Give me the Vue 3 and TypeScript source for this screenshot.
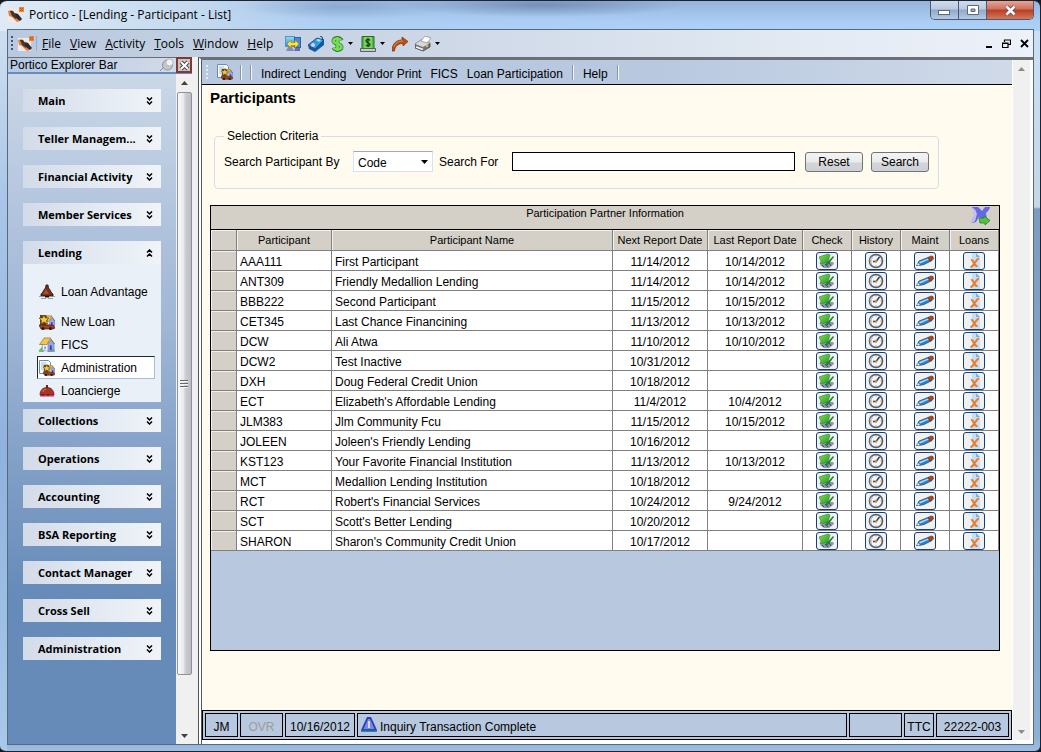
<script setup lang="ts">
import { ref } from 'vue'

interface Participant {
  code: string
  name: string
  next: string
  last: string
}

interface Group {
  title: string
  items?: { label: string; icon: string }[]
}

const menus = ['File', 'View', 'Activity', 'Tools', 'Window', 'Help']

const tools = [
  { label: 'Network', icon: 'network', drop: false },
  { label: 'Device', icon: 'device', drop: false },
  { label: 'Currency', icon: 'dollar', drop: true },
  { label: 'Cash drawer', icon: 'cash', drop: true },
  { label: 'Forward', icon: 'forward', drop: false },
  { label: 'Print', icon: 'printer', drop: true },
]

const links = ['Indirect Lending', 'Vendor Print', 'FICS', 'Loan Participation']

const groups: Group[] = [
  { title: 'Main' },
  { title: 'Teller Managem...' },
  { title: 'Financial Activity' },
  { title: 'Member Services' },
  {
    title: 'Lending',
    items: [
      { label: 'Loan Advantage', icon: 'advantage' },
      { label: 'New Loan', icon: 'newloan' },
      { label: 'FICS', icon: 'house' },
      { label: 'Administration', icon: 'admin' },
      { label: 'Loancierge', icon: 'bell' },
    ],
  },
  { title: 'Collections' },
  { title: 'Operations' },
  { title: 'Accounting' },
  { title: 'BSA Reporting' },
  { title: 'Contact Manager' },
  { title: 'Cross Sell' },
  { title: 'Administration' },
]

const activeItem = ref('Administration')
const searchBy = ref('Code')
const searchFor = ref('')

const actions = [
  { label: 'Check', icon: 'check' },
  { label: 'History', icon: 'clock' },
  { label: 'Maint', icon: 'pencil' },
  { label: 'Loans', icon: 'loan' },
]

const participants: Participant[] = [
  { code: 'AAA111', name: 'First Participant', next: '11/14/2012', last: '10/14/2012' },
  { code: 'ANT309', name: 'Friendly Medallion Lending', next: '11/14/2012', last: '10/14/2012' },
  { code: 'BBB222', name: 'Second Participant', next: '11/15/2012', last: '10/15/2012' },
  { code: 'CET345', name: 'Last Chance Financining', next: '11/13/2012', last: '10/13/2012' },
  { code: 'DCW', name: 'Ali Atwa', next: '11/10/2012', last: '10/10/2012' },
  { code: 'DCW2', name: 'Test Inactive', next: '10/31/2012', last: '' },
  { code: 'DXH', name: 'Doug Federal Credit Union', next: '10/18/2012', last: '' },
  { code: 'ECT', name: "Elizabeth's Affordable Lending", next: '11/4/2012', last: '10/4/2012' },
  { code: 'JLM383', name: 'Jlm Community Fcu', next: '11/15/2012', last: '10/15/2012' },
  { code: 'JOLEEN', name: "Joleen's Friendly Lending", next: '10/16/2012', last: '' },
  { code: 'KST123', name: 'Your Favorite Financial Institution', next: '11/13/2012', last: '10/13/2012' },
  { code: 'MCT', name: 'Medallion Lending Institution', next: '10/18/2012', last: '' },
  { code: 'RCT', name: "Robert's Financial Services", next: '10/24/2012', last: '9/24/2012' },
  { code: 'SCT', name: "Scott's Better Lending", next: '10/20/2012', last: '' },
  { code: 'SHARON', name: "Sharon's Community Credit Union", next: '10/17/2012', last: '' },
]

function reset(): void {
  searchBy.value = 'Code'
  searchFor.value = ''
}
</script>

<template>
  <div class="window">
    <svg class="defs" width="0" height="0" aria-hidden="true">
      <defs>
        <linearGradient id="g-blue" x1="0" y1="0" x2="0" y2="1">
          <stop offset="0" stop-color="#8fe0fa" />
          <stop offset="1" stop-color="#2f86dc" />
        </linearGradient>
        <linearGradient id="g-green" x1="0" y1="0" x2="1" y2="1">
          <stop offset="0" stop-color="#8be04a" />
          <stop offset="1" stop-color="#1f9a2a" />
        </linearGradient>
      </defs>
      <symbol id="logo" viewBox="0 0 16 16">
        <rect x="0" y="2" width="13" height="13" fill="#f3e9e2" />
        <path d="M0 4l4-1 3 4 3 2 2 5-3 1-5-5-3-1z" fill="#e8803a" />
        <path d="M2 4l3 0 3 4v4L4 9z" fill="#38383c" />
        <path d="M7 6l3 1 4 5-2 2-4-3z" fill="#28282e" />
        <rect x="11" y="0" width="5" height="5" fill="#ee8434" />
        <path d="M12 1l3 3M15 1l-3 3" stroke="#c4541a" stroke-width="1" />
      </symbol>
      <symbol id="network" viewBox="0 0 16 16">
        <rect x="0.5" y="0.5" width="9" height="10" fill="url(#g-blue)" stroke="#5a94b8" />
        <rect x="9.500" y="1.500" width="6" height="10" fill="#3f8de0" stroke="#3a5f9a" />
        <path d="M10 12h5v3H9z" fill="#666bb4" />
        <path d="M3 11h4l2 4H1z" fill="#8286c4" />
        <path d="M2 8l4-4v2.500h4V4l4 4-4 4V9.500H6V12z" fill="#ffe23a" stroke="#a88a14" stroke-width="0.7" />
      </symbol>
      <symbol id="device" viewBox="0 0 16 16">
        <path d="M0 9l9-7 7 2v5l-9 7-6-3z" fill="#145a9c" />
        <path d="M0 9l9-7 7 2-9 9z" fill="#2d9ae0" stroke="#0d4c86" stroke-width="0.8" />
        <path d="M8 4l2-1 3 1-2 2z" fill="#a8e4fa" />
        <circle cx="5" cy="9" r="2" fill="#f2c6e2" />
        <path d="M12 0l2 1 1 3" stroke="#123f6a" fill="none" />
      </symbol>
      <symbol id="dollar" viewBox="0 0 12 16">
        <path d="M10 4.500C9 1.500 2 1.500 2 5c0 3.500 8 2.500 8 6 0 3.500-7 3-8 .5M6 0v16" fill="none" stroke="#35803a" stroke-width="4" />
        <path d="M9.500 4.500C8 2 2 2 2 5c0 3 8 2.500 8 6 0 3-7 2.500-8 .5M6 1v14" fill="none" stroke="#78dc54" stroke-width="2.600" />
      </symbol>
      <symbol id="cash" viewBox="0 0 16 16">
        <path d="M2 .5h12V13H2z" fill="#55b847" stroke="#276a28" />
        <path d="M4 1h8v11H4z" fill="#7ad25d" />
        <path d="M10 4.500C9 3 6 3 6 5s4 1.500 4 3.500S7 10.500 6 9M8 2v9" fill="none" stroke="#153d17" stroke-width="1.300" />
        <path d="M.5 12.500h15v3H.5z" fill="#c6cbca" stroke="#56605c" />
      </symbol>
      <symbol id="forward" viewBox="0 0 16 16">
        <path d="M0 15C0 8 4 4 10 4V1l6 4.500-5 4.500V7.500C6 7.500 3 10 2.500 15z" fill="#bc5014" stroke="#7c2e08" stroke-width="0.700" />
        <path d="M2 11c1-4 4-6 9-6" fill="none" stroke="#ec9a50" stroke-width="0.800" />
      </symbol>
      <symbol id="printer" viewBox="0 0 16 16">
        <path d="M0 8l6-4 9 3v4l-7 4-8-3z" fill="#77777b" stroke="#3a3a3c" stroke-width="0.700" />
        <path d="M0 8l6-4 9 3-7 4z" fill="#d8d8d8" />
        <path d="M6 5l4-5 6 2-4 5z" fill="#fff" stroke="#777" stroke-width="0.600" />
        <path d="M1 11l7 2.500" stroke="#f4f4f4" stroke-width="1.500" />
        <circle cx="12" cy="10" r="1" fill="#e8d24a" />
      </symbol>
      <symbol id="housebody" viewBox="0 0 16 16">
        <path d="M3 6h7l5 1v7l-4 1.500L3 14z" fill="#eef1ff" stroke="#6a78ac" stroke-width="0.600" />
        <path d="M9 8l3-5 3.500 4v7L9 15z" fill="#98a5ea" stroke="#5561a8" stroke-width="0.500" />
        <path d="M0 8L5 1h7L8 8z" fill="#f2c64c" stroke="#8d6a1c" stroke-width="0.700" />
        <path d="M12 2l4 5.500" stroke="#7a5a1c" />
        <path d="M11 9h2v5h-2z" fill="#2f45a4" />
        <path d="M5 10h2v3H5z" fill="#8aa2dc" />
      </symbol>
      <symbol id="house" viewBox="0 0 16 16">
        <path d="M0 13l3-3 12 1 1 4H0z" fill="#74bb6a" />
        <use href="#housebody" width="16" height="15" />
        <path d="M4 15l3-2 2 2z" fill="#e0e6f4" />
      </symbol>
      <symbol id="newloan" viewBox="0 0 16 16">
        <use href="#housebody" x="3" y="1" width="13" height="13" />
        <path d="M1 1h6l2 4-2 6H1z" fill="#5b4520" />
        <path d="M5 1l1.500 3H10L7.500 6.500 8.500 10 5 8 2 10l.5-3.500L0 4h3.500z" fill="#f7c83c" stroke="#6d4a10" stroke-width="0.700" />
        <path d="M0 11h14l2 3-2 1H2z" fill="#a3401c" stroke="#3a1a10" stroke-width="0.700" />
        <circle cx="4" cy="14.500" r="1.500" fill="#26181a" /><circle cx="11.500" cy="14.500" r="1.500" fill="#26181a" />
      </symbol>
      <symbol id="admin" viewBox="0 0 16 16">
        <path d="M.5.5h9l2 2v11H.5z" fill="#f4fbff" stroke="#6f8ba4" />
        <path d="M2 3h5M2 5h3M2 7h2M2 9h2" stroke="#9ebfd8" />
        <use href="#newloan" x="4" y="4" width="12" height="12" />
      </symbol>
      <symbol id="advantage" viewBox="0 0 16 16">
        <path d="M7 1h2l.5 3C11 5 12 9 14 10v2H2v-2c2-1 3-5 4.500-6z" fill="#74301c" stroke="#201010" stroke-width="0.800" />
        <path d="M7 5c-1 2-2 4-3 5h6z" fill="#b0502a" />
        <path d="M0 12.500h16M2 14.500h5M9 14.500h5" stroke="#8b8b93" stroke-width="0.800" />
        <path d="M6 12h4v1.500H6z" fill="#201414" />
      </symbol>
      <symbol id="bell" viewBox="0 0 16 16">
        <path d="M1 12C1 7 4 4.500 8 4.500S15 7 15 12z" fill="#a93620" stroke="#5a1810" stroke-width="0.700" />
        <path d="M7 2h2v3H7z" fill="#6a2416" />
        <path d="M4 9c.5-2 1.500-3 3-3" stroke="#e08060" fill="none" />
        <path d="M1 12h14v1.500H1z" fill="#cf2c7c" /><path d="M3 12h2M8 12h2" stroke="#4b1030" />
      </symbol>
      <symbol id="check" viewBox="0 0 16 16">
        <path d="M1 12l4-3h9l1 2-5 4H5z" fill="#9092ac" />
        <path d="M3 12l2 2M6 11l3 3M10 10l2 3" stroke="#46466a" />
        <path d="M0 4l9-3 2 1-2 7-8 2 1-3z" fill="url(#g-green)" stroke="#2b7d2a" stroke-width="0.600" />
        <path d="M6 12l8-9 1 1-7 9z" fill="#1e7c38" />
      </symbol>
      <symbol id="clock" viewBox="0 0 16 16">
        <circle cx="8" cy="8" r="6.500" fill="#eef5fb" stroke="#56606c" stroke-width="1.600" />
        <path d="M3.500 11a5.500 5.500 0 0 1 1-7" stroke="#b7c6d4" fill="none" stroke-width="1.500" />
        <path d="M8 8.500L11.500 4M8 8.500H5" stroke="#2c3c58" stroke-width="1.400" />
        <path d="M8 2v1.500M8 12.500V14M12.500 8H14M2 8h1.500" stroke="#d8882e" />
        <circle cx="8" cy="8.500" r="1.200" fill="#e88828" />
      </symbol>
      <symbol id="pencil" viewBox="0 0 18 12">
        <path d="M1 10l2-4 9-3.500 3 0 1 3-8 4-5 1z" fill="#2e7fce" stroke="#173f74" stroke-width="0.700" />
        <path d="M3 7l9-3.500 1 1-9 4z" fill="#a5dcfa" />
        <path d="M12 2.500l3-1.500 2 .5.500 2.500-3.500 2z" fill="#b04a1e" stroke="#66230c" stroke-width="0.600" />
        <path d="M0 11l2-3 2 2z" fill="#f2ead8" /><path d="M0 11l1-1.500 1 1z" fill="#222" />
      </symbol>
      <symbol id="loan" viewBox="0 0 14 16">
        <path d="M1 0h8l4 4v12H1z" fill="#c4e0f8" />
        <path d="M1 0h4v16H1z" fill="#e4f2fd" />
        <path d="M9 0l4 4H9z" fill="#7cb2e4" />
        <path d="M4 7c3.500-1 2 7 6.500 6M12 5.500C9 6 7 13 3.500 14.500" fill="none" stroke="#ef7a22" stroke-width="2" />
      </symbol>
      <symbol id="export" viewBox="0 0 20 20">
        <path d="M1 1h6l4 4 3-4h5c0 2-2 4-4 6l1 6-4 2-4-4-3 5-4 1c-1-2 1-5 3-8z" fill="#6467e8" />
        <path d="M1 2c3 0 4 3 5 6l-2 7-3 2c-1-2 1-5 2-7z" fill="#c0bdf2" />
        <path d="M8 12h5v-2l6 4.500-5 4.500V17H9z" fill="#52c43a" stroke="#258326" stroke-width="0.800" />
      </symbol>
      <symbol id="chev" viewBox="0 0 7 8">
        <path d="M1 .5l2.500 2.500L6 .5M1 4.500L3.500 7 6 4.500" fill="none" stroke="#000" stroke-width="1.500" />
      </symbol>
      <symbol id="tri" viewBox="0 0 7 4"><path d="M0 0h7L3.500 4z" /></symbol>
    </svg>

    <header class="titlebar">
      <svg class="ico16"><use href="#logo" /></svg>
      <h1>Portico - [Lending - Participant - List]</h1>
      <div class="winbuttons">
        <button type="button" class="min" aria-label="Minimize">
          <svg width="13" height="6"><rect x="0.500" y="0.500" width="11" height="4" fill="#fff" stroke="#5f6878" /></svg>
        </button>
        <button type="button" class="max" aria-label="Maximize">
          <svg width="12" height="11"><path d="M.5.5h11v9H.5zM4 4v2.500h4V4z" fill="#fff" fill-rule="evenodd" stroke="#5f6878" /></svg>
        </button>
        <button type="button" class="close" aria-label="Close">
          <svg width="13" height="11" viewBox="0 0 13 11"><path d="M2.500 1.500l8 8M10.500 1.500l-8 8" stroke="#5d4a52" stroke-width="4" /><path d="M2.500 1.500l8 8M10.500 1.500l-8 8" stroke="#fff" stroke-width="2.500" /></svg>
        </button>
      </div>
    </header>

    <div class="client">
      <nav class="menubar" aria-label="Main menu">
        <span class="grip dark"></span>
        <svg class="ico16"><use href="#logo" /></svg>
        <span class="vline"></span>
        <div class="menus">
          <button v-for="m in menus" :key="m" type="button"><u>{{ m[0] }}</u>{{ m.slice(1) }}</button>
        </div>
        <div class="tools">
          <button v-for="t in tools" :key="t.label" type="button" :aria-label="t.label">
            <svg class="ico16" :class="t.icon"><use :href="'#' + t.icon" /></svg>
            <svg v-if="t.drop" class="drop" width="5" height="3"><use href="#tri" /></svg>
          </button>
        </div>
        <div class="mdi">
          <button type="button" aria-label="Minimize document"><svg width="9" height="9"><path d="M2 7h6v2H2z" /></svg></button>
          <button type="button" aria-label="Restore document"><svg width="9" height="9"><path d="M2.500 3V1h6v4.500H6.500M.5 4h5.500v4.500H.5zM2 1h7M0 4.500h6" fill="none" stroke="#000" stroke-width="1.200" /></svg></button>
          <button type="button" aria-label="Close document"><svg width="9" height="9"><path d="M1 1l7 7M8 1L1 8" stroke="#000" stroke-width="1.800" /></svg></button>
        </div>
      </nav>

      <div class="work">
        <aside class="explorer">
          <div class="exphead">
            <h2>Portico Explorer Bar</h2>
            <button type="button" class="pin" aria-label="Auto hide">
              <svg width="15" height="14" viewBox="0 0 15 14"><path d="M1 13l5-5" stroke="#8a8a8a" /><circle cx="8.500" cy="7" r="5" fill="#c4c6ca" stroke="#909298" /><circle cx="10.500" cy="4.500" r="3.500" fill="#f2f2f4" stroke="#a8aab0" stroke-width="0.700" /></svg>
            </button>
            <button type="button" class="expclose" aria-label="Close explorer bar">
              <svg width="11" height="11" viewBox="0 0 11 11"><path d="M2 2l7 7M9 2L2 9" stroke="#4a4a4a" stroke-width="4" /><path d="M2 2l7 7M9 2L2 9" stroke="#fff" stroke-width="2" /></svg>
            </button>
          </div>
          <div class="expbody">
            <div class="groups">
              <section v-for="g in groups" :key="g.title" :class="{ open: g.items }">
                <button type="button" class="grouphead" :aria-expanded="!!g.items">
                  <span>{{ g.title }}</span>
                  <svg class="chev" width="7" height="8"><use href="#chev" /></svg>
                </button>
                <div v-if="g.items" class="items">
                  <button
                    v-for="i in g.items"
                    :key="i.label"
                    type="button"
                    :class="{ active: i.label === activeItem }"
                    @click="activeItem = i.label"
                  >
                    <svg class="ico16"><use :href="'#' + i.icon" /></svg>{{ i.label }}
                  </button>
                </div>
              </section>
            </div>
            <div class="scroll">
              <svg class="up" width="7" height="4"><use href="#tri" /></svg>
              <div class="thumb"><i></i><i></i><i></i></div>
              <svg width="7" height="4"><use href="#tri" /></svg>
            </div>
          </div>
        </aside>

        <div class="document">
          <div class="page">
            <nav class="linkbar" aria-label="Lending">
              <span class="grip"></span>
              <button type="button" aria-label="Administration"><svg class="ico16"><use href="#admin" /></svg></button>
              <div class="seps"><span class="sep"></span><span class="sep"></span></div>
              <a v-for="l in links" :key="l" href="#">{{ l }}</a>
              <span class="sep"></span>
              <a href="#">Help</a>
              <span class="sep"></span>
            </nav>

            <main>
              <h2 class="heading">Participants</h2>
              <fieldset>
                <legend>Selection Criteria</legend>
                <form class="criteria" @submit.prevent>
                  <label for="by">Search Participant By</label>
                  <span class="selectbox">
                    <select id="by" v-model="searchBy">
                      <option>Code</option>
                      <option>Name</option>
                    </select>
                    <svg width="7" height="4"><use href="#tri" /></svg>
                  </span>
                  <label for="for" class="forlabel">Search For</label>
                  <input id="for" v-model="searchFor" type="text" />
                  <button type="button" @click="reset">Reset</button>
                  <button type="submit">Search</button>
                </form>
              </fieldset>

              <div class="grid">
                <div class="gridtitle">
                  <span id="grid-title">Participation Partner Information</span>
                  <button type="button" aria-label="Export"><svg width="20" height="20"><use href="#export" /></svg></button>
                </div>
                <table aria-labelledby="grid-title">
                  <colgroup>
                    <col class="c-sel" /><col class="c-date" /><col /><col class="c-date" /><col class="c-date" />
                    <col v-for="a in actions" :key="a.label" class="c-act" />
                  </colgroup>
                  <thead>
                    <tr>
                      <th></th>
                      <th>Participant</th>
                      <th>Participant Name</th>
                      <th>Next Report Date</th>
                      <th>Last Report Date</th>
                      <th v-for="a in actions" :key="a.label">{{ a.label }}</th>
                    </tr>
                  </thead>
                  <tbody>
                    <tr v-for="p in participants" :key="p.code">
                      <td class="sel"></td>
                      <td>{{ p.code }}</td>
                      <td>{{ p.name }}</td>
                      <td class="date">{{ p.next }}</td>
                      <td class="date">{{ p.last }}</td>
                      <td v-for="a in actions" :key="a.label" class="act">
                        <button type="button" :aria-label="a.label + ' ' + p.code">
                          <svg :class="a.icon"><use :href="'#' + a.icon" /></svg>
                        </button>
                      </td>
                    </tr>
                  </tbody>
                </table>
              </div>
            </main>

            <footer class="status">
              <span class="s-user">JM</span>
              <span class="s-ovr">OVR</span>
              <span class="s-date">10/16/2012</span>
              <span class="s-msg">
                <svg width="16" height="15" viewBox="0 0 16 15"><path d="M6 0h4l5.500 12v2.500H.5V12z" fill="#2b3fae" /><path d="M7 2h2l4.500 10h-11z" fill="#7a86ee" /><path d="M8 4v7" stroke="#f4f6ff" stroke-width="1.500" /><path d="M0 13.500h16" stroke="#1c6a8c" stroke-width="2" /></svg>
                Inquiry Transaction Complete
              </span>
              <span class="s-blank"></span>
              <span class="s-ttc">TTC</span>
              <span class="s-id">22222-003</span>
            </footer>
          </div>
          <div class="scroll idle">
            <svg class="up" width="7" height="4"><use href="#tri" /></svg>
            <svg width="7" height="4"><use href="#tri" /></svg>
          </div>
        </div>
      </div>
    </div>
  </div>
</template>

<style>
body {
  background: #16181c;
}
</style>

<style scoped>
* {
  box-sizing: border-box;
}
.window {
  min-height: 100vh;
  display: flex;
  flex-direction: column;
  padding: 0 6px 6px 7px;
  border: 1px solid #1c2430;
  border-left-width: 0;
  border-radius: 7px 7px 6px 6px;
  overflow: hidden;
  background:
    radial-gradient(ellipse 14% 12px at 52% 4px, rgba(78, 100, 140, 0.5), transparent) no-repeat,
    radial-gradient(ellipse 10% 12px at 33% 6px, rgba(96, 124, 168, 0.35), transparent) no-repeat,
    linear-gradient(90deg, #dfeaf6 0, #c3d9ef 200px, rgba(176, 208, 242, 0.4) 330px, rgba(176, 212, 247, 0) 700px) 0 0 / 100% 30px no-repeat,
    linear-gradient(#96b3d9 0, #a9cdf4 20px, #add2f7 30px) 0 0 / 100% 30px no-repeat,
    linear-gradient(#d5e3f2 0, #a9c6e8 200px, #8fb2de 60%, #a9c8ea) 0 0 / 7px 100% no-repeat,
    linear-gradient(#c9e2fa 0, #c4d6e8 206px, #7c9cc0 208px, #8fb0d6 98%, #9dbde2);
  font-family: "Liberation Sans", Arial, sans-serif;
  font-size: 12px;
  line-height: 16px;
  color: #000;
}
.defs {
  position: absolute;
}
svg {
  display: block;
  flex: none;
}
h1,
h2 {
  margin: 0;
  font-weight: normal;
}
button {
  font: inherit;
  color: inherit;
  margin: 0;
  padding: 0;
  border: 0;
  background: none;
}
.ico16 {
  width: 16px;
  height: 16px;
}

.titlebar {
  display: flex;
  height: 28px;
  padding-left: 1px;
}
.titlebar > .ico16 {
  margin: 6px 5px 0 0;
}
.titlebar h1 {
  flex: 1;
  margin-top: 6px;
  font-family: "Open Sans", "Noto Sans", sans-serif;
  font-size: 12px;
}
.winbuttons {
  display: flex;
  height: 19px;
  border: 1px solid #4c5a70;
  border-top: 0;
  border-radius: 0 0 5px 5px;
  overflow: hidden;
}
.winbuttons button {
  display: flex;
  align-items: center;
  justify-content: center;
  width: 28px;
  border-right: 1px solid #4c5a70;
  background: linear-gradient(#cfdcec, #b9cadf 45%, #91a8c8 50%, #b4cae4);
}
.winbuttons .min svg {
  margin-top: 5px;
}
.winbuttons .close {
  width: 46px;
  border-right: 0;
  background: linear-gradient(#e4a598, #d0705e 45%, #b93d20 50%, #d4785c);
}

.client {
  flex: 1;
  display: flex;
  flex-direction: column;
  border: 1px solid #566b78;
  background: #f0f0f0;
}
.menubar {
  display: flex;
  align-items: center;
  height: 27px;
  padding: 0 4px 0 3px;
  background: linear-gradient(90deg, #b9c9df, #cbd6e6 38%, #e3eaf3 78%, #edf1f9);
  font-family: "Open Sans", "Noto Sans", sans-serif;
}
.grip {
  width: 2px;
  height: 15px;
  background: repeating-linear-gradient(#e8edf4 0 2px, transparent 2px 4px);
}
.grip.dark {
  margin-right: 5px;
  background: repeating-linear-gradient(#3c5585 0 2px, transparent 2px 4px);
}
.vline {
  width: 1px;
  height: 15px;
  margin: 0 5px 0 2px;
  background: #8fb0d8;
}
.menus {
  display: flex;
  gap: 9px;
}
.tools {
  display: flex;
  gap: 7px;
  margin-left: 12px;
}
.tools button {
  display: flex;
  align-items: center;
  gap: 4px;
}
.tools .dollar {
  width: 13px;
}
.mdi {
  display: flex;
  gap: 9px;
  margin-left: auto;
}

.work {
  flex: 1;
  display: flex;
  min-height: 0;
}
.explorer {
  display: flex;
  flex-direction: column;
  width: 184px;
  margin-right: 6px;
}
.exphead {
  display: flex;
  align-items: center;
  height: 17px;
  padding-left: 2px;
  background: linear-gradient(90deg, #b5c8e2, #d3dcea);
  border-bottom: 2px solid #6a8cba;
  border-top: 1px solid #6d6d70;
}
.exphead h2 {
  flex: 1;
  font-size: 12px;
  line-height: 14px;
}
.pin {
  margin-right: 2px;
}
.expclose {
  display: flex;
  align-items: center;
  justify-content: center;
  width: 16px;
  height: 16px;
  border: 2px solid #7d3a30;
  background: #cfc4c2;
}
.expbody {
  flex: 1;
  display: flex;
}
.groups {
  flex: 1;
  display: flex;
  flex-direction: column;
  gap: 15px;
  padding: 15px 15px 20px;
  background: linear-gradient(#cad7e7 0, #b1c3dd 22%, #9fb6d5 38%, #88a4ca 54%, #668bb8 78%, #668bb8);
}
.groups .open {
  margin-bottom: -8px;
}
.grouphead {
  display: flex;
  align-items: center;
  justify-content: space-between;
  width: 100%;
  height: 23px;
  padding: 0 8px 0 15px;
  background: linear-gradient(90deg, #d2dbe8, #e2e9f2 50%, #f0f4f8);
  font-family: "Open Sans", "Noto Sans", sans-serif;
  font-size: 11px;
  font-weight: bold;
  white-space: nowrap;
}
.open .chev {
  transform: scaleY(-1);
}
.items {
  padding: 16px 6px 0 14px;
  background: #eaf0f7;
}
.items button {
  display: flex;
  align-items: center;
  gap: 6px;
  width: 100%;
  height: 23px;
  padding: 0 0 0 1px;
  border: 1px solid transparent;
  white-space: nowrap;
}
.items button:first-child {
  margin-bottom: 7px;
}
.items .active {
  background: #fff;
  border-color: #20242c #a8bcd8 #a8bcd8 #20242c;
}
.scroll {
  display: flex;
  flex-direction: column;
  align-items: center;
  justify-content: space-between;
  width: 16px;
  padding: 7px 0 6px;
  background: #f0f0f0;
  fill: #404040;
}
.scroll .up {
  transform: scaleY(-1);
}
.thumb {
  flex: 1;
  display: flex;
  flex-direction: column;
  align-items: center;
  justify-content: center;
  gap: 1px;
  width: 15px;
  margin: 7px 0 59px;
  border: 1px solid #8f9398;
  border-radius: 2px;
  background: linear-gradient(90deg, #fafafa, #e8e8ea 45%, #cdced2 55%, #bcbec3);
}
.thumb i {
  width: 8px;
  height: 2px;
  background: #63666c;
  border-bottom: 1px solid #f4f4f4;
}

.document {
  flex: 1;
  display: flex;
  min-width: 0;
  padding: 0 3px 4px 0;
  border-top: 3px solid #6a7076;
  border-left: 4px double #50555c;
  background: #fff;
}
.page {
  flex: 1;
  display: flex;
  flex-direction: column;
  min-width: 0;
}
.idle {
  width: 17px;
  margin-left: 1px;
  fill: #8c8c8c;
}
.linkbar {
  display: flex;
  align-items: center;
  gap: 9px;
  height: 25px;
  padding: 0 4px;
  border-bottom: 1px solid #000;
  background: linear-gradient(90deg, #b7c8df 55%, #d0dae9);
}
.linkbar a {
  padding-top: 3px;
  color: #000;
  text-decoration: none;
  white-space: nowrap;
}
.seps {
  display: flex;
  gap: 8px;
}
.linkbar button + .seps {
  margin-left: -2px;
}
.sep {
  width: 2px;
  height: 15px;
  border-left: 1px solid #8794aa;
  background: #f4f6fa;
}
main {
  flex: 1;
  display: flex;
  flex-direction: column;
  padding: 3px 12px 59px 8px;
  background: #fffbef;
}
.heading {
  font-size: 15px;
  font-weight: bold;
  line-height: 20px;
}
fieldset {
  min-width: 0;
  margin: 20px 61px 16px 4px;
  padding: 0 9px 16px;
  border: 1px solid #d5dcec;
  border-radius: 4px;
}
legend {
  padding: 0 3px;
}
.criteria {
  display: flex;
  align-items: center;
  padding-top: 7px;
}
.criteria label {
  white-space: nowrap;
}
.criteria label:first-child {
  width: 129px;
}
.criteria .forlabel {
  width: 73px;
  margin-left: 6px;
}
.selectbox {
  position: relative;
  width: 80px;
}
.selectbox select {
  display: block;
  width: 100%;
  height: 21px;
  padding: 2px 4px 0;
  border: 1px solid #dbe2ee;
  border-top-color: #a6a9b0;
  appearance: none;
  background: #fff;
  font: inherit;
}
.selectbox svg {
  position: absolute;
  right: 5px;
  top: 9px;
  pointer-events: none;
}
.criteria input {
  flex: 1;
  min-width: 0;
  height: 19px;
  padding: 0 3px;
  border: 1px solid #000;
  background: #fff;
  font: inherit;
}
.criteria button {
  width: 58px;
  height: 20px;
  margin-left: 8px;
  border: 1px solid #707278;
  border-radius: 3px;
  background: linear-gradient(#f3f3f3, #ebebeb 50%, #d4d5d8 55%, #cfd0d4);
}
.criteria input + button {
  margin-left: 10px;
}

.grid {
  flex: 1;
  border: 1px solid #000;
  background: #b7c8df;
}
.gridtitle {
  display: flex;
  position: relative;
  justify-content: center;
  height: 24px;
  border-bottom: 1px solid #000;
  background: #d4d0c8;
  font-size: 11px;
  line-height: 14px;
}
.gridtitle button {
  position: absolute;
  right: 8px;
  top: 0;
}
table {
  width: 100%;
  table-layout: fixed;
  border-collapse: separate;
  border-spacing: 0;
}
.c-sel {
  width: 26px;
}
.c-date {
  width: 95px;
}
.c-act {
  width: 49px;
}
th,
td {
  height: 20px;
  padding: 0;
  border-right: 1px solid #808080;
  border-bottom: 1px solid #808080;
  white-space: nowrap;
}
th {
  height: 21px;
  background: #d4d0c8;
  box-shadow: inset 1px 1px #f4f2ee;
  font-size: 11px;
  font-weight: normal;
}
td {
  padding: 3px 0 0 3px;
  background: #fff;
}
td.sel {
  background: #d4d0c8;
  box-shadow: inset 1px 1px #f4f2ee;
}
td.date {
  padding-left: 0;
  text-align: center;
}
td.act {
  padding: 1px 0 0;
}
.act button {
  display: flex;
  align-items: center;
  justify-content: center;
  width: 22px;
  height: 18px;
  margin: 0 auto;
  border: 1px solid #123f7c;
  border-radius: 3px;
  background: #f2f1ec;
}
.act svg {
  width: 16px;
  height: 16px;
}
.act .pencil {
  width: 18px;
  height: 12px;
}
.act .loan {
  width: 14px;
}

.status {
  display: flex;
  gap: 2px;
  height: 30px;
  padding: 2px;
  border: 1px solid #000;
  background: #b7c8df;
}
.status span {
  display: flex;
  align-items: center;
  justify-content: center;
  padding-top: 3px;
  border: 1px solid #000;
  white-space: nowrap;
}
.status .s-user {
  width: 33px;
}
.status .s-ovr {
  width: 43px;
  color: #a09c9c;
}
.status .s-date {
  width: 70px;
}
.status .s-msg {
  flex: 1;
  justify-content: flex-start;
  gap: 3px;
  padding-left: 3px;
}
.s-msg svg {
  margin-bottom: 4px;
}
.status .s-blank {
  width: 53px;
}
.status .s-ttc {
  width: 30px;
}
.status .s-id {
  width: 73px;
}
</style>
